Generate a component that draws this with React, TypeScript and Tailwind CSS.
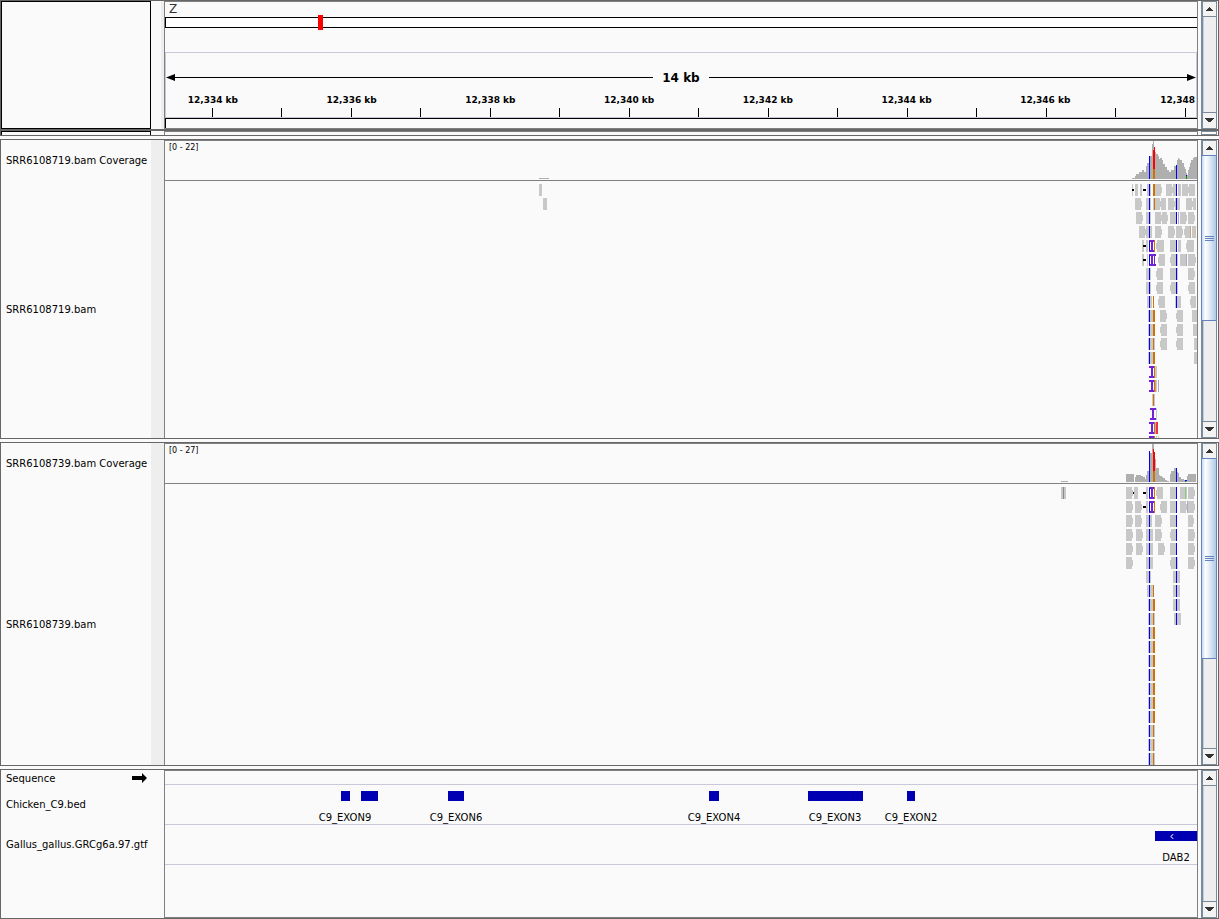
import type { ReactNode } from "react";

/* Tracks are drawn in a 1032-unit wide space that spans the visible locus. */
const VIEW = 1032;
const pct = (x: number) => `${(x / VIEW) * 100}%`;

const COLORS: Record<string, string> = {
  g: "#c8c8c8",
  b: "#0000ff",
  o: "#d17105",
  k: "#000000",
  r: "#ee3344",
  v: "#b0a8c8",
  t: "#cfa27a",
  n: "#80d080",
};

/* A row lists segments "<kind><x>,<width>"; "I" is an insertion mark, "W" an
   insertion mark on a read with a mismatch beside it. */
const ORIGIN = 954;
const rowsA = [
  "g13,1 k13,2 g16,3 g21,2 k24,3 g28,2 b30,1 g31,1 o34,2 g36,6 g47,6 g54,3 b57,1 g59,3 g63,6 g70,6",
  "g16,6 g27,3 b30,1 g31,1 g34,1 o35,1 g36,5 g42,5 g49,6 g56,1 b57,1 g58,3 g67,6 g74,3",
  "g17,6 g27,3 b30,1 g31,1 g36,6 g43,5 g51,6 b57,1 v59,1 g61,6 g69,6",
  "g20,6 g27,3 b30,1 g31,2 g36,6 g49,6 g57,6 g66,5 t71,1 g73,4",
  "g23,2 k24,3 g27,2 W30,5 o35,1 g38,7 g51,6 b57,1 g59,3 g68,7",
  "g23,2 k24,3 g28,1 W30,7 g40,6 g52,5 b57,1 g58,1 g61,6 v67,1 g69,7",
  "g27,3 b30,1 g31,1 g38,6 g51,6 b57,1 g58,1 g69,6",
  "g27,3 b30,1 g31,1 g38,6 g52,5 b57,1 g58,1 g70,6",
  "g28,2 b30,1 g31,2 o34,1 g40,6 g56,1 b57,1 g58,4 g72,5",
  "g29,1 b30,1 g31,3 o34,2 g41,6 g58,6 g73,5",
  "g29,1 b30,1 g31,3 o34,2 g42,6 g58,6 g74,4",
  "g29,1 b30,1 g31,3 o34,1 g35,1 g42,6 g58,6 g75,3",
  "g29,1 b30,1 g31,3 o34,2 g75,3",
  "I30,5 o35,1 g36,2",
  "I30,5 o35,1 t36,1 g37,1 v39,1",
  "g33,1 o34,1 g35,1",
  "I31,6 g37,1",
  "I30,5 o35,1 v36,1 r37,2",
  "I30,5 o35,1 g37,1 g39,1",
];
const tall = "g29,1 b30,1 g31,3 o34,2";
const tallEnd = "g29,1 b30,1 g31,3 o34,1 g35,1";
const rowsB = [
  "g7,6 g15,4 k14,1 k24,3 g27,2 W30,5 o35,1 g38,6 g51,6 b57,1 g61,5 n66,1 g67,1 g69,6",
  "g7,6 g16,6 k24,3 g27,2 W30,5 o35,1 g42,6 g51,6 b57,1 g61,6 v68,1 g69,6",
  "g7,6 g16,6 g27,3 b30,1 g31,2 g36,6 g51,6 b57,1 g69,5",
  "g7,6 g17,6 g27,3 b30,1 g31,3 g36,6 g52,5 b57,1 g69,6",
  "g7,6 g17,6 g27,3 b30,1 g31,3 g39,6 g51,6 b57,1 g69,6",
  "g7,6 g27,3 b30,1 g31,3 g52,5 b57,1 g58,1 g69,6",
  "g27,3 b30,1 g31,1 g54,3 b57,1 g58,3",
  "g28,2 b30,1 g31,3 o34,1 g54,3 b57,1 g58,3",
  tall + " g54,3 b57,1 g58,3",
  tallEnd + " g55,2 b57,1 g58,4",
  tall, tall, tall, tall, tall, tall, tall,
  tallEnd,
  tallEnd,
  tallEnd,
];

/* Coverage steps: [x, width, height] */
type Step = [number, number, number];
const coverA: Step[] = [
  [13, 3, 1], [16, 1, 3], [17, 3, 5], [20, 3, 7], [23, 2, 9], [25, 2, 7], [27, 1, 13], [28, 2, 16],
  [30, 1, 23], [31, 2, 23], [33, 1, 35], [34, 1, 38], [35, 1, 31], [36, 1, 27], [37, 2, 25], [39, 1, 23],
  [40, 1, 20], [41, 2, 21], [43, 1, 19], [44, 2, 15], [46, 2, 12], [48, 2, 9], [50, 1, 7], [51, 1, 7],
  [52, 3, 9], [55, 2, 13], [57, 1, 14], [58, 1, 19], [59, 1, 21], [60, 1, 20], [61, 2, 19], [63, 2, 16],
  [65, 1, 12], [66, 1, 10], [67, 1, 6], [68, 1, 4], [69, 1, 9], [70, 1, 12], [71, 1, 16], [72, 2, 19],
  [74, 1, 21], [75, 1, 22], [76, 2, 22],
];
const coverB: Step[] = [
  [7, 8, 8], [16, 1, 5], [17, 5, 7], [22, 2, 6], [24, 2, 5], [26, 1, 3], [27, 1, 7], [28, 2, 11],
  [30, 1, 30], [31, 2, 29], [33, 1, 38], [34, 1, 38], [35, 1, 30], [36, 1, 23], [37, 3, 14], [40, 1, 7],
  [41, 2, 6], [43, 1, 5], [44, 2, 4], [46, 2, 2], [48, 2, 1], [51, 1, 8], [52, 3, 11], [55, 3, 14],
  [58, 1, 10], [59, 1, 9], [60, 2, 5], [62, 3, 3], [65, 3, 2], [68, 1, 6], [69, 8, 8],
];

function Read({ seg, y }: { seg: string; y: number }) {
  const kind = seg[0];
  const [dx, w] = seg.slice(1).split(",").map(Number);
  const x = ORIGIN + dx;
  if (kind === "k") return <rect x={x} y={y + 5} width={w} height={2} fill="#000" />;
  if (kind === "I" || kind === "W") {
    return (
      <g>
        <rect x={x} y={y} width={w} height={12} fill={kind === "W" ? "#fff" : "#fafafa"} />
        <path
          d={`M${x} ${y}h${w}v2h${-w}z M${x} ${y + 10}h${w}v2h${-w}z M${x + 2} ${y}h2v12h-2z`}
          fill="#7321d6"
        />
        {kind === "W" && <rect x={x} y={y + 1} width={1} height={10} fill="#0000ff" />}
        {w === 7 && <rect x={x + 5} y={y} width={1} height={12} fill="#7321d6" />}
      </g>
    );
  }
  const arrow = kind === "g" && w >= 5;
  const left = arrow && dx > 37 && dx % 2 === 0;
  return (
    <g fill={COLORS[kind]}>
      <rect x={x} y={y} width={w} height={12} />
      {arrow && <rect x={left ? x - 1 : x + w} y={y + 3} width={1} height={6} />}
    </g>
  );
}

function Reads({ rows, height, extra }: { rows: string[]; height: number; extra: ReactNode }) {
  return (
    <svg
      className="block w-full"
      height={height}
      viewBox={`0 0 ${VIEW} ${height}`}
      preserveAspectRatio="none"
      shapeRendering="crispEdges"
      aria-hidden="true"
    >
      {rows.map((row, i) => (
        <g key={i}>
          {row.split(" ").map((seg) => (
            <Read key={seg} seg={seg} y={3 + i * 14} />
          ))}
        </g>
      ))}
      {extra}
    </svg>
  );
}

function Coverage({ steps, range, extra }: { steps: Step[]; range: string; extra: ReactNode }) {
  return (
    <div className="relative h-10 border-b border-[#808080]">
      <svg
        className="block w-full"
        height={39}
        viewBox={`0 0 ${VIEW} 39`}
        preserveAspectRatio="none"
        shapeRendering="crispEdges"
        aria-hidden="true"
      >
        {steps.map(([x, w, h]) => (
          <rect key={x} x={ORIGIN + x} y={38 - h} width={w} height={h} fill="#afafaf" />
        ))}
        {extra}
      </svg>
      <span className="absolute top-px left-1 text-[8px] leading-3">{range}</span>
    </div>
  );
}

function ScrollBar({ label, thumb }: { label: string; thumb?: string }) {
  return (
    <div
      role="group"
      aria-label={label}
      className="mr-px ml-[3px] flex w-4 shrink-0 flex-col border border-l-2 border-[#7a8a99] bg-[#eeeeee]"
    >
      <button
        type="button"
        aria-label="Scroll up"
        className="flex h-[15px] shrink-0 items-center justify-center border-b border-[#7a8a99] bg-[#f3f3f3]"
      >
        <svg width="9" height="4" viewBox="0 0 9 4" shapeRendering="crispEdges" fill="#333">
          <path d="M4 0h1v1h1v1h1v1h1v1H1V3h1V2h1V1h1z" />
        </svg>
      </button>
      <div className="flex flex-1 flex-col border-l border-[#b8cfe5]">
        {thumb && (
          <div
            className={
              "-mt-px -mr-px -ml-[3px] flex flex-col items-center justify-center gap-px border border-[#6382bf] bg-linear-to-r from-[#c5d9ee] via-[#ffffff] via-25% to-[#b0cbe6] " +
              thumb
            }
          >
            <span className="h-px w-[9px] bg-[#6382bf]" />
            <span className="h-px w-[9px] bg-[#6382bf]" />
            <span className="h-px w-[9px] bg-[#6382bf]" />
          </div>
        )}
      </div>
      <button
        type="button"
        aria-label="Scroll down"
        className="flex h-4 shrink-0 items-center justify-center border-t border-[#7a8a99] bg-[#f3f3f3] pb-px"
      >
        <svg width="9" height="4" viewBox="0 0 9 4" shapeRendering="crispEdges" fill="#333">
          <path d="M0 0h9v1H8v1H7v1H6v1H3V3H2V2H1V1H0z" />
        </svg>
      </button>
    </div>
  );
}

function AlignmentPanel(props: {
  name: string;
  range: string;
  size: string;
  readsHeight: number;
  steps: Step[];
  rows: string[];
  thumb: string;
  coverExtra: ReactNode;
  readExtra: ReactNode;
}) {
  return (
    <section className={"flex border border-[#666666] " + props.size}>
      <div className="flex w-[150px] shrink-0 flex-col pl-[5px] text-[10px] leading-3">
        <div className="flex h-[41px] items-center whitespace-nowrap">{props.name} Coverage</div>
        <div className="flex flex-1 items-center">{props.name}</div>
      </div>
      <div className="w-[13px] shrink-0 bg-[#eeeeee]" />
      <div className="min-w-0 flex-1 overflow-hidden border-t border-r border-l border-[#808080]">
        <Coverage steps={props.steps} range={props.range} extra={props.coverExtra} />
        <Reads rows={props.rows} height={props.readsHeight} extra={props.readExtra} />
      </div>
      <ScrollBar label={props.name + " scroll bar"} thumb={props.thumb} />
    </section>
  );
}

const ticks = Array.from({ length: 15 }, (_, i) => Math.floor(47 + i * 69.5));
const kbLabels = ["12,334 kb", "12,336 kb", "12,338 kb", "12,340 kb", "12,342 kb", "12,344 kb", "12,346 kb"];

function Ruler() {
  return (
    <section className="flex h-[130px] border border-[#666666]">
      <div className="w-[150px] shrink-0 border border-black" />
      <div className="ml-[10px] w-[3px] shrink-0 bg-[#eeeeee]" />
      <div className="flex min-w-0 flex-1 flex-col border border-[#808080]">
        <div className="h-[15px] pl-1 text-xs leading-[15px] text-[#333]">Z</div>
        <div className="relative h-[11px] border-y border-l border-black bg-white">
          <div className="absolute -top-[3px] h-[15px] w-[5px] bg-[#ff0000]" style={{ left: pct(152) }} />
        </div>
        <div className="relative mt-6 h-[66px] overflow-hidden border border-[#c8c8d8]">
          <div className="flex h-[49px] items-center">
            <svg width="9" height="7" viewBox="0 0 9 7" className="shrink-0" aria-hidden="true">
              <path d="M0 3.500 9 0v7z" />
            </svg>
            <div className="h-px flex-1 bg-black" />
            <span className="w-14 text-center text-xs leading-4 font-bold">14 kb</span>
            <div className="h-px flex-1 bg-black" />
            <svg width="9" height="7" viewBox="0 0 9 7" className="shrink-0" aria-hidden="true">
              <path d="M9 3.500 0 0v7z" />
            </svg>
          </div>
          <svg
            className="absolute bottom-0 -left-px block w-[calc(100%+2px)]"
            height={9}
            viewBox={`0 0 ${VIEW} 9`}
            preserveAspectRatio="none"
            shapeRendering="crispEdges"
            aria-hidden="true"
          >
            {ticks.map((x) => (
              <rect key={x} x={x} y={0} width={1} height={9} />
            ))}
          </svg>
          {kbLabels.map((label, i) => (
            <span
              key={label}
              className="absolute top-[41px] -translate-x-1/2 text-[9px] leading-3 font-bold whitespace-nowrap"
              style={{ left: pct(47 + i * 139) }}
            >
              {label}
            </span>
          ))}
          <span className="absolute top-[41px] right-px text-[9px] leading-3 font-bold">12,348</span>
        </div>
        <div className="flex-1 border-t border-l border-black" />
      </div>
      <ScrollBar label="Ruler scroll bar" />
    </section>
  );
}

const exons = [
  { x: 176, w: 9 },
  { x: 196, w: 17, label: "C9_EXON9", at: 180 },
  { x: 283, w: 16, label: "C9_EXON6", at: 291 },
  { x: 544, w: 10, label: "C9_EXON4", at: 549 },
  { x: 643, w: 55, label: "C9_EXON3", at: 670 },
  { x: 742, w: 8, label: "C9_EXON2", at: 746 },
];

function FeaturePanel() {
  return (
    <section className="flex min-h-[150px] flex-1 border border-[#666666]">
      <div className="w-[163px] shrink-0 pl-[5px] text-[10px] leading-3">
        <div className="flex h-[18px] items-center justify-between pr-[17px]">
          <span>Sequence</span>
          <svg width="15" height="10" viewBox="0 0 15 10" className="mb-[3px]" aria-label="Forward strand">
            <path d="M0 3h10V0l5 5-5 5V7H0z" />
          </svg>
        </div>
        <div className="flex h-[34px] items-center">Chicken_C9.bed</div>
        <div className="flex h-[46px] items-center">Gallus_gallus.GRCg6a.97.gtf</div>
      </div>
      <div className="min-w-0 flex-1 overflow-hidden border border-[#808080] text-[10px] leading-3">
        <div className="h-[14px] border-b border-[#c8c8d8]" />
        <div className="relative h-10 border-b border-[#c8c8d8]">
          {exons.map((e) => (
            <div
              key={e.x}
              className="absolute top-[6px] h-[10px] bg-[#0000b2]"
              style={{ left: pct(e.x), width: pct(e.w) }}
            />
          ))}
          {exons.map(
            (e) =>
              e.label && (
                <span key={e.label} className="absolute top-[27px] -translate-x-1/2" style={{ left: pct(e.at) }}>
                  {e.label}
                </span>
              ),
          )}
        </div>
        <div className="relative h-10 border-b border-[#c8c8d8]">
          <div
            className="absolute top-[6px] h-[10px] bg-[#0000b2]"
            style={{ left: pct(990), width: pct(42) }}
          >
            <svg className="absolute top-[3px] left-[15px]" width="4" height="5" viewBox="0 0 4 5" aria-hidden="true">
              <path d="M3.500 0 .7 2.500 3.500 5" fill="none" stroke="#fff" />
            </svg>
          </div>
          <span className="absolute top-[27px] -translate-x-1/2" style={{ left: pct(1011) }}>
            DAB2
          </span>
        </div>
      </div>
      <ScrollBar label="Feature scroll bar" />
    </section>
  );
}

const R = ({ x, y, w, h, c }: { x: number; y: number; w: number; h: number; c: string }) => (
  <rect x={x} y={y} width={w} height={h} fill={c} />
);

export default function App() {
  return (
    <main className="flex min-h-screen flex-col bg-[#fafafa] font-['DejaVu_Sans',sans-serif] text-black">
      <Ruler />
      <div className="flex h-[6px] border border-[#666666]">
        <div className="w-[150px] border-x border-t border-black" />
        <div className="ml-[13px] flex-1 border-x border-t border-[#808080]" />
        <div className="mr-px ml-[3px] w-4 border border-[#7a8a99]" />
      </div>
      <div className="h-[3px]" />
      <AlignmentPanel
        name="SRR6108719.bam"
        range="[0 - 22]"
        size="h-[300px]"
        readsHeight={257}
        steps={coverA}
        rows={rowsA}
        thumb="h-[166px]"
        coverExtra={
          <>
            <R x={374} y={37} w={10} h={1} c="#afafaf" />
            <R x={984} y={15} w={1} h={23} c="#0000ff" />
            <R x={988} y={9} w={1} h={19} c="#ff0000" />
            <R x={989} y={6} w={1} h={22} c="#ff0000" />
            <R x={988} y={28} w={2} h={10} c="#d17105" />
            <R x={1011} y={24} w={1} h={14} c="#0000ff" />
            <R x={1021} y={34} w={1} h={1} c="#0000ff" />
            <R x={1021} y={35} w={1} h={3} c="#009600" />
          </>
        }
        readExtra={
          <>
            <R x={374} y={3} w={3} h={12} c="#c8c8c8" />
            <R x={378} y={17} w={4} h={12} c="#c8c8c8" />
          </>
        }
      />
      <div className="h-[3px]" />
      <AlignmentPanel
        name="SRR6108739.bam"
        range="[0 - 27]"
        size="h-[324px]"
        readsHeight={281}
        steps={coverB}
        rows={rowsB}
        thumb="h-[201px]"
        coverExtra={
          <>
            <R x={896} y={37} w={7} h={1} c="#afafaf" />
            <R x={984} y={7} w={1} h={31} c="#0000ff" />
            <R x={988} y={5} w={1} h={22} c="#ff0000" />
            <R x={989} y={8} w={1} h={20} c="#ff0000" />
            <R x={988} y={27} w={2} h={11} c="#d17105" />
            <R x={1011} y={24} w={1} h={14} c="#0000ff" />
            <R x={1020} y={36} w={2} h={1} c="#0000ff" />
            <R x={1020} y={37} w={1} h={1} c="#009600" />
          </>
        }
        readExtra={
          <>
            <R x={896} y={3} w={5} h={12} c="#c8c8c8" />
            <R x={898} y={3} w={1} h={12} c="#8a8a8a" />
          </>
        }
      />
      <div className="h-[3px]" />
      <FeaturePanel />
    </main>
  );
}
